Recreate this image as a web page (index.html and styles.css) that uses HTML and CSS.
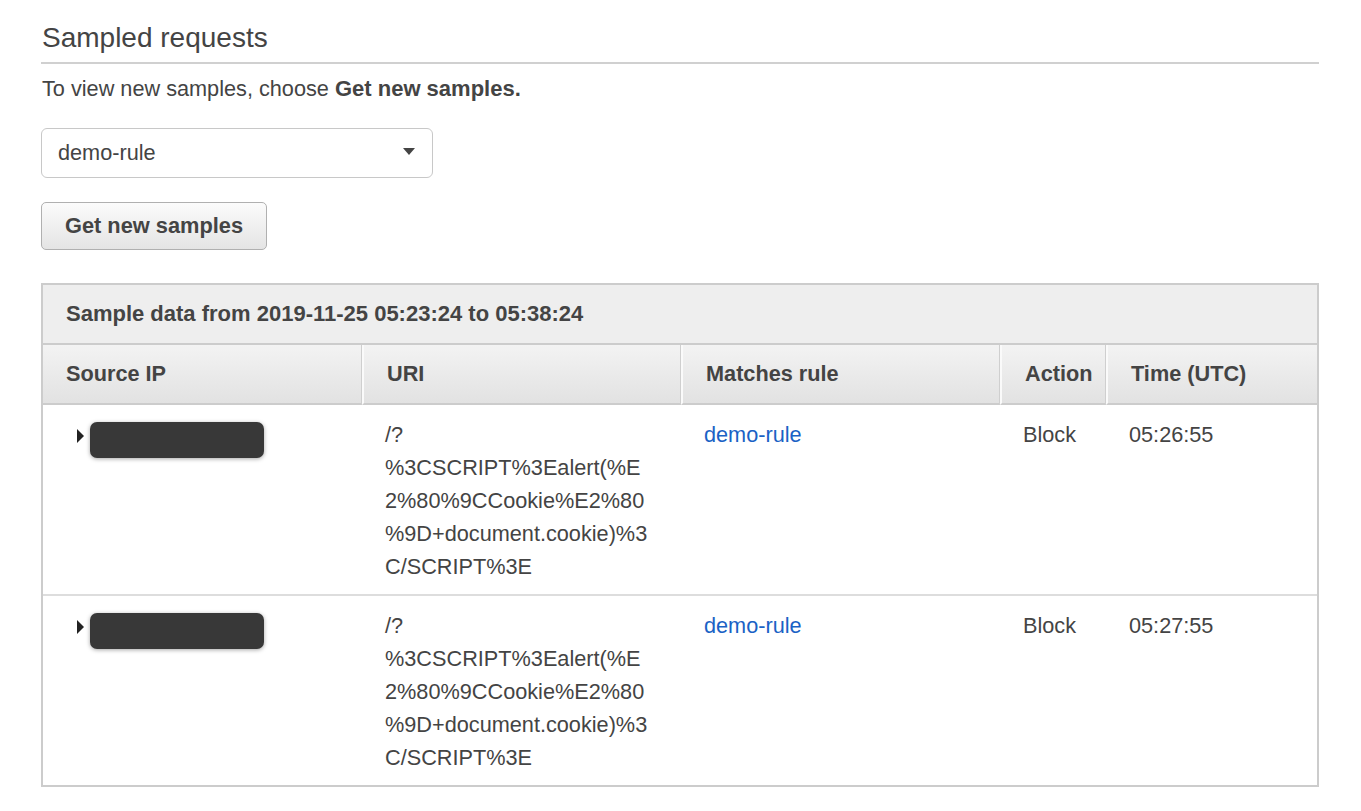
FILE: index.html
```html
<!DOCTYPE html>
<html lang="en">
<head>
<meta charset="utf-8">
<title>Sampled requests</title>
<link rel="stylesheet" href="styles.css">
</head>
<body>
<div class="page">
  <h2 class="title">Sampled requests</h2>
  <p class="hint">To view new samples, choose <b>Get new samples.</b></p>
  <div class="select">
    <span class="select-value">demo-rule</span>
    <svg class="caret" width="12" height="7" viewBox="0 0 12 7"><path d="M0 0h12L6 7z" fill="#444"/></svg>
  </div>
  <button class="btn" type="button">Get new samples</button>

  <table class="samples">
    <colgroup>
      <col class="c1"><col class="c2"><col class="c3"><col class="c4"><col class="c5">
    </colgroup>
    <thead>
      <tr><th class="range" colspan="5">Sample data from 2019-11-25 05:23:24 to 05:38:24</th></tr>
      <tr class="heads">
        <th>Source IP</th>
        <th>URI</th>
        <th>Matches rule</th>
        <th>Action</th>
        <th>Time (UTC)</th>
      </tr>
    </thead>
    <tbody>
      <tr>
        <td class="ip"><span class="expander"></span><span class="redacted"></span></td>
        <td class="uri">/?<br>%3CSCRIPT%3Ealert(%E2%80%9CCookie%E2%80%9D+document.cookie)%3C/SCRIPT%3E</td>
        <td><a class="link" href="#">demo-rule</a></td>
        <td>Block</td>
        <td>05:26:55</td>
      </tr>
      <tr>
        <td class="ip"><span class="expander"></span><span class="redacted"></span></td>
        <td class="uri">/?<br>%3CSCRIPT%3Ealert(%E2%80%9CCookie%E2%80%9D+document.cookie)%3C/SCRIPT%3E</td>
        <td><a class="link" href="#">demo-rule</a></td>
        <td>Block</td>
        <td>05:27:55</td>
      </tr>
    </tbody>
  </table>
</div>
</body>
</html>
```

FILE: styles.css
```css
* { box-sizing: border-box; }

html, body {
  margin: 0;
  padding: 0;
  background: #fff;
}

body {
  font-family: "Liberation Sans", Arial, sans-serif;
  font-size: 21.7px;
  color: #444;
}

.page {
  width: 1319px;
  padding: 22px 0 0 41px;
}

.title {
  margin: 0;
  font-size: 28px;
  font-weight: normal;
  line-height: 31px;
  color: #444;
  padding: 0 0 9px 1px;
  border-bottom: 2px solid #d0d0d0;
}

.hint {
  margin: 8px 0 0 1px;
  line-height: 33px;
}

.hint b { font-weight: bold; font-size: 22px; }

.select {
  margin-top: 23px;
  width: 392px;
  height: 50px;
  border: 1px solid #c8c8c8;
  border-radius: 6px;
  display: flex;
  align-items: center;
  justify-content: space-between;
  padding: 0 17px 0 16px;
}

.select-value { line-height: 1; }

.caret { display: block; margin-top: -3px; }

.btn {
  display: block;
  margin-top: 24px;
  width: 226px;
  height: 48px;
  font-family: inherit;
  font-size: 21.8px;
  font-weight: bold;
  color: #444;
  border: 1px solid #b0b0b0;
  border-radius: 5px;
  background: linear-gradient(#fbfbfb, #e4e4e4);
  padding: 0;
}

.samples {
  margin-top: 33px;
  width: 1278px;
  border: 2px solid #ccc;
  border-collapse: separate;
  border-spacing: 0;
  table-layout: fixed;
}

.c1, .c2, .c3 { width: 319px; }
.c4 { width: 106px; }

.samples th {
  text-align: left;
  font-weight: bold;
  color: #444;
}

.range {
  height: 60px;
  font-size: 22px;
  background: #eee;
  padding: 0 0 0 23px;
  border-bottom: 2px solid #ccc;
}

.heads th {
  height: 60px;
  padding: 0 0 0 23px;
  background: linear-gradient(#f3f3f3, #e2e2e2);
  border-bottom: 2px solid #ccc;
}

.heads th:not(:last-child) { border-right: 1px solid #cfcfcf; }
.heads th + th { border-left: 2px solid #fafafa; }

.samples td {
  vertical-align: top;
  padding: 13px 12px 11px 23px;
  line-height: 33px;
  border-bottom: 2px solid #ddd;
}

.samples tbody tr:last-child td { border-bottom: none; }

.samples td.ip {
  padding-left: 34px;
  padding-top: 17px;
}

.samples td.uri {
  overflow-wrap: anywhere;
  padding-right: 31px;
}

.expander {
  display: inline-block;
  vertical-align: middle;
  width: 0;
  height: 0;
  border-top: 7px solid transparent;
  border-bottom: 7px solid transparent;
  border-left: 7px solid #222;
  margin-right: 6px;
  position: relative;
  top: -4px;
}

.redacted {
  display: inline-block;
  vertical-align: middle;
  width: 174px;
  height: 36px;
  border-radius: 7px;
  background: #383838;
  box-shadow: 0 1px 4px rgba(0, 0, 0, 0.35);
}

.link {
  color: #1a62c5;
  text-decoration: none;
}
```
